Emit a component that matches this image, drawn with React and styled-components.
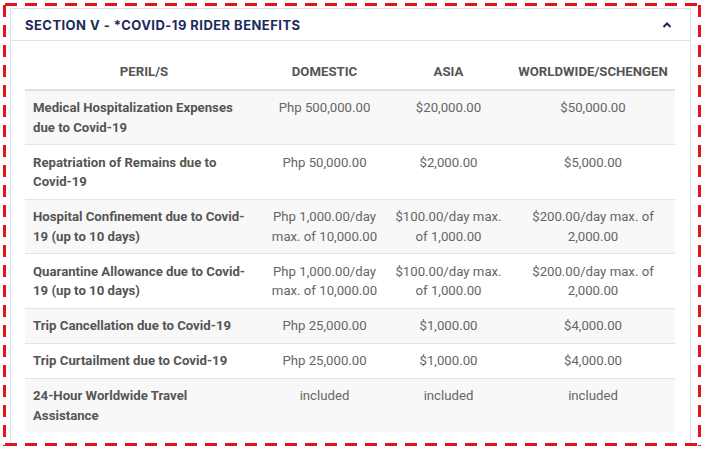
import React from "react";
import styled, { createGlobalStyle } from "styled-components";

const Global = createGlobalStyle`
  html, body { margin: 0; padding: 0; background: #fff; }
  body { font-family: Roboto, "Liberation Sans", Arial, sans-serif; }
`;

const rows = [
  { peril: "Medical Hospitalization Expenses due to Covid-19", dom: "Php 500,000.00", asia: "$20,000.00", ww: "$50,000.00" },
  { peril: "Repatriation of Remains due to Covid-19", dom: "Php 50,000.00", asia: "$2,000.00", ww: "$5,000.00" },
  { peril: "Hospital Confinement due to Covid-19 (up to 10 days)", dom: "Php 1,000.00/day max. of 10,000.00", asia: "$100.00/day max. of 1,000.00", ww: "$200.00/day max. of 2,000.00" },
  { peril: "Quarantine Allowance due to Covid-19 (up to 10 days)", dom: "Php 1,000.00/day max. of 10,000.00", asia: "$100.00/day max. of 1,000.00", ww: "$200.00/day max. of 2,000.00" },
  { peril: "Trip Cancellation due to Covid-19", dom: "Php 25,000.00", asia: "$1,000.00", ww: "$4,000.00" },
  { peril: "Trip Curtailment due to Covid-19", dom: "Php 25,000.00", asia: "$1,000.00", ww: "$4,000.00" },
  { peril: "24-Hour Worldwide Travel Assistance", dom: "included", asia: "included", ww: "included" },
];

const Frame = styled.div`
  position: relative;
  margin: 3px;
  width: 698px;
  height: 443px;
  overflow: hidden;
  box-sizing: border-box;
  padding: 5px 11px 0 7px;
  &::after {
    content: "";
    position: absolute;
    inset: 0;
    pointer-events: none;
    background-image:
      repeating-linear-gradient(90deg, #e2141c 0 12px, transparent 12px 20px),
      repeating-linear-gradient(90deg, #e2141c 0 12px, transparent 12px 20px),
      repeating-linear-gradient(180deg, #e2141c 0 12px, transparent 12px 20px),
      repeating-linear-gradient(180deg, #e2141c 0 12px, transparent 12px 20px);
    background-size: 100% 3px, 100% 3px, 3px 100%, 3px 100%;
    background-position: 2px 0, 2px 100%, 0 2px, 100% 2px;
    background-repeat: no-repeat;
  }
`;

const Card = styled.section`
  border: 1px solid #e1e1e1;
  background: #fff;
  width: 681px;
  box-sizing: border-box;
  height: 460px;
`;

const Header = styled.div`
  display: flex;
  align-items: center;
  justify-content: space-between;
  height: 30px;
  padding: 1px 18px 0 14px;
  border-bottom: 1px solid #e1e1e1;
`;

const Title = styled.h2`
  margin: 0;
  font-family: Inter, "Open Sans", sans-serif;
  font-weight: 700;
  font-size: 13px;
  letter-spacing: 0.45px;
  color: #1d2b5b;
`;

const Caret = styled.svg`
  width: 10px;
  height: 6px;
  display: block;
`;

const Body = styled.div`
  padding: 13px 14px 0 14px;
`;

const Table = styled.table`
  width: 650px;
  border-collapse: collapse;
  table-layout: fixed;
  font-size: 13.2px;
  line-height: 19.5px;
`;

const Th = styled.th`
  padding: 8px 2px 7px;
  font-weight: 700;
  color: #555;
  text-align: center;
  text-transform: uppercase;
  border-bottom: 2px solid #dedede;
`;

const Tr = styled.tr`
  background: ${(p) => (p.$odd ? "#f8f8f8" : "#fff")};
  & + & { border-top: 1px solid #e4e4e4; }
`;

const Label = styled.td`
  padding: 7.5px 14px 7px 8px;
  font-weight: 700;
  color: #555;
  text-align: left;
  vertical-align: top;
`;

const Value = styled.td`
  padding: 7.5px 4px 7px;
  color: #666;
  text-align: center;
  vertical-align: top;
`;

export default function App() {
  return (
    <>
      <Global />
      <Frame>
        <Card>
          <Header>
            <Title>SECTION V - *COVID-19 RIDER BENEFITS</Title>
            <Caret viewBox="0 0 10 6">
              <polyline points="1.5,5 5,1.5 8.5,5" fill="none" stroke="#1d2b5b" strokeWidth="2" />
            </Caret>
          </Header>
          <Body>
            <Table>
              <colgroup>
                <col style={{ width: 238 }} />
                <col style={{ width: 123 }} />
                <col style={{ width: 125 }} />
                <col style={{ width: 164 }} />
              </colgroup>
              <thead>
                <tr>
                  <Th>Peril/s</Th>
                  <Th>Domestic</Th>
                  <Th>Asia</Th>
                  <Th>Worldwide/Schengen</Th>
                </tr>
              </thead>
              <tbody>
                {rows.map((r, i) => (
                  <Tr key={i} $odd={i % 2 === 0}>
                    <Label>{r.peril}</Label>
                    <Value>{r.dom}</Value>
                    <Value>{r.asia}</Value>
                    <Value>{r.ww}</Value>
                  </Tr>
                ))}
              </tbody>
            </Table>
          </Body>
        </Card>
      </Frame>
    </>
  );
}
